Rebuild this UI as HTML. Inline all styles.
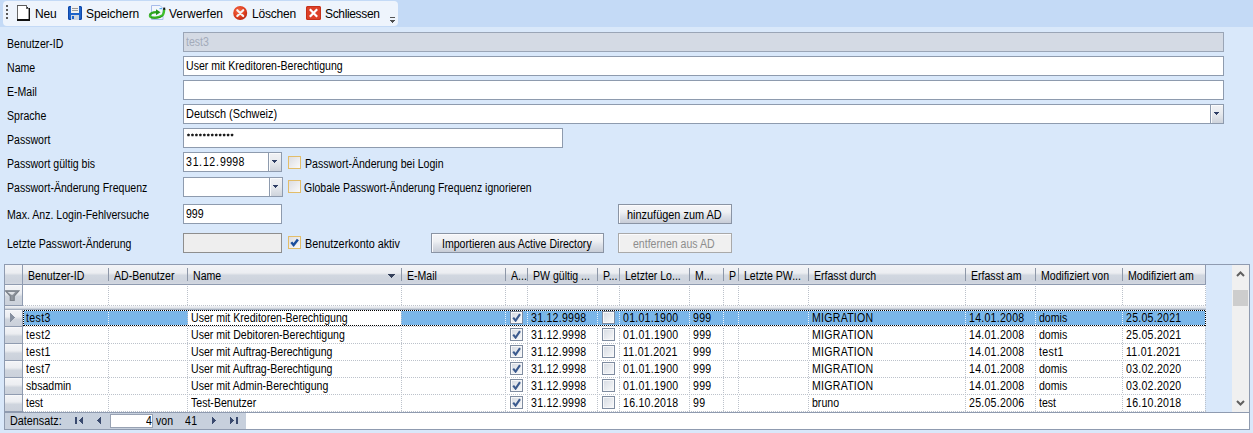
<!DOCTYPE html>
<html><head><meta charset="utf-8">
<style>
*{box-sizing:border-box}
html,body{margin:0;padding:0}
body{width:1253px;height:433px;overflow:hidden;position:relative;background:#d9e8fa;font-family:"Liberation Sans",sans-serif;font-size:11px;color:#000;letter-spacing:-0.28px}
.a{position:absolute}
.t{position:absolute;white-space:nowrap;font-size:12px;line-height:14px;height:14px;letter-spacing:0;transform:scaleX(.88);transform-origin:0 0}
.tb{position:absolute;white-space:nowrap;font-size:12px;line-height:14px;letter-spacing:-0.22px}
.box{position:absolute;background:#fff;border:1px solid #8e9bae}
.cb{position:absolute;width:13px;height:13px;border:1px solid #e2bd6a;background:linear-gradient(135deg,#dcdde2,#fafafa)}
.btn{position:absolute;height:20px;border:1px solid #8a94a4;background:linear-gradient(#f5f5f8 0%,#eef0f3 40%,#dde1e8 62%,#c8cdd7 100%);box-shadow:inset 1px 1px 0 #fbfbfd}
.ddb{position:absolute;width:14px;border:1px solid #8e9bae;background:linear-gradient(#f1f2f5 0%,#e8ebef 45%,#cfd4dc 100%);box-shadow:inset 1px 1px 0 #fafbfc}
.arr{position:absolute;width:5px;height:3px;background:#2e3e64;clip-path:polygon(0 0,100% 0,50% 100%)}
.hdr{background:linear-gradient(#f3f4f7 0%,#eceef2 40%,#e4e7ec 46%,#d1d7e0 54%,#cdd3dd 88%,#d3d8e1 100%)}
.ind{background:linear-gradient(#f3f4f7 0%,#eceef2 40%,#e2e5ea 48%,#cfd5de 58%,#cbd1db 100%);box-shadow:inset 0 1px 0 #f7f8fa}
.band{background:linear-gradient(#f2f3f6 0%,#dfe3e9 50%,#b9c1cc 75%,#8f9bb0 100%)}
.hd{background:repeating-linear-gradient(90deg,#bcc2cb 0 1px,#fff 1px 2px)}
.vd{background:repeating-linear-gradient(180deg,#bcc2cb 0 1px,transparent 1px 2px)}
.fh{background:repeating-linear-gradient(90deg,#fff 0 1px,#000 1px 2px)}
.fv{background:repeating-linear-gradient(180deg,#fff 0 1px,#000 1px 2px)}
.vdw{background:repeating-linear-gradient(180deg,#e8f2fb 0 1px,transparent 1px 2px)}
.gcb{width:13px;height:13px;border:1px solid #7f8ca0;background:linear-gradient(135deg,#d5dae2 0%,#eef0f3 70%,#fafafa 100%);box-shadow:inset 0 0 0 1px #f6f7f9}
</style></head><body>
<!-- toolbar strip -->
<div class="a" style="left:0;top:0;width:1253px;height:27px;background:#c4daf6"></div>
<div class="a" style="left:3px;top:1px;width:395px;height:25px;background:#eef4fc;border-radius:4px"></div>
<!-- grip -->
<div class="a" style="left:6px;top:5px;width:2px;height:2px;background:#5a5a5a"></div>
<div class="a" style="left:6px;top:9px;width:2px;height:2px;background:#5a5a5a"></div>
<div class="a" style="left:6px;top:13px;width:2px;height:2px;background:#5a5a5a"></div>
<div class="a" style="left:6px;top:17px;width:2px;height:2px;background:#5a5a5a"></div>
<!-- new icon -->
<svg class="a" style="left:16px;top:4px" width="16" height="18" viewBox="0 0 16 18" shape-rendering="crispEdges">
<path d="M2 2 H10 V3 H11 V4 H12 V5 H13 V16 H2 Z" fill="#fff"/>
<rect x="1" y="1" width="1" height="16" fill="#6a6a6a"/>
<rect x="1" y="1" width="9" height="1" fill="#5a5a5a"/>
<rect x="10" y="2" width="1" height="1" fill="#2a2a2a"/>
<rect x="11" y="3" width="1" height="1" fill="#2a2a2a"/>
<rect x="12" y="4" width="1" height="1" fill="#2a2a2a"/>
<rect x="10" y="1" width="1" height="3" fill="#666"/><rect x="10" y="4" width="3" height="1" fill="#666"/>
<rect x="13" y="4" width="1" height="13" fill="#111"/>
<rect x="12" y="5" width="1" height="11" fill="#9a9a9a"/>
<rect x="1" y="15" width="13" height="2" fill="#111"/>
</svg>
<div class="tb" style="left:35px;top:7px">Neu</div>
<!-- save icon -->
<svg class="a" style="left:68px;top:6px" width="14" height="14" viewBox="0 0 14 14">
<rect x="0" y="0" width="14" height="14" rx="1.5" fill="#1d62c9"/>
<rect x="0.5" y="0.5" width="13" height="13" rx="1.5" fill="none" stroke="#0f47a8"/>
<rect x="3" y="0" width="8" height="7" fill="#f2f2f2"/>
<rect x="4" y="2" width="6" height="1" fill="#9a9a9a"/>
<rect x="4" y="4" width="6" height="1" fill="#9a9a9a"/>
<rect x="3" y="9" width="8" height="5" fill="#cfd6e2"/>
<rect x="4" y="10" width="2" height="3" fill="#1d62c9"/>
</svg>
<div class="tb" style="left:86px;top:7px;letter-spacing:-0.1px">Speichern</div>
<!-- discard icon -->
<svg class="a" style="left:148px;top:4px" width="18" height="17" viewBox="0 0 18 17">
<path d="M3.5 1.5 H12 L15 4.5 V15.5 H3.5 Z" fill="#f2f6fe" stroke="#a7bcea" stroke-width="1"/>
<rect x="11.5" y="4" width="2.5" height="1.2" fill="#4fb3f2"/>
<path d="M1.8 11.8 C2 9.2 5 8.2 8.8 8.2" fill="none" stroke="#2fa61f" stroke-width="2.2"/>
<path d="M8 5.2 L12.5 8.2 L8 11.2 Z" fill="#22961a"/>
<path d="M1.8 11.8 C2.6 14.2 11 14.4 14.6 11.2 C15.9 9.8 16.1 7.2 16.3 5" fill="none" stroke="#3fbf2b" stroke-width="2.3"/>
<path d="M3 13.6 C6 14.8 12 14.4 14.8 12" fill="none" stroke="#1e8a15" stroke-width="0.9"/>
<rect x="15.2" y="3.6" width="2" height="2.2" fill="#111"/>
</svg>
<div class="tb" style="left:169px;top:7px;letter-spacing:0">Verwerfen</div>
<!-- delete icon -->
<svg class="a" style="left:233px;top:6px" width="15" height="15" viewBox="0 0 15 15">
<defs><radialGradient id="rg" cx="0.4" cy="0.35" r="0.7"><stop offset="0" stop-color="#f56a4a"/><stop offset="0.6" stop-color="#e0401f"/><stop offset="1" stop-color="#b42412"/></radialGradient></defs>
<circle cx="7.2" cy="7" r="7" fill="url(#rg)"/>
<path d="M4.3 4.2 L10.2 10 M10.2 4.2 L4.3 10" stroke="#f4f4f4" stroke-width="2.2" stroke-linecap="round"/>
</svg>
<div class="tb" style="left:252px;top:7px">Löschen</div>
<!-- close icon -->
<svg class="a" style="left:306px;top:6px" width="15" height="14" viewBox="0 0 15 14">
<rect x="0" y="0" width="15" height="14" rx="1.5" fill="#dd4128"/>
<rect x="0.5" y="0.5" width="14" height="13" rx="1.5" fill="none" stroke="#c5301a"/>
<path d="M3.8 3.2 L11.2 10.8 M11.2 3.2 L3.8 10.8" stroke="#fff" stroke-width="2.2"/>
</svg>
<div class="tb" style="left:325px;top:7px;letter-spacing:-0.35px">Schliessen</div>
<!-- overflow -->
<div class="a" style="left:390px;top:17px;width:5px;height:1px;background:#555"></div>
<svg class="a" style="left:390px;top:20px" width="5" height="3" viewBox="0 0 5 3" shape-rendering="crispEdges"><path d="M0 0H5V1H4V2H3V3H2V2H1V1H0Z" fill="#505050"/></svg>

<!-- form labels -->
<div class="t" style="left:7px;top:37px">Benutzer-ID</div>
<div class="t" style="left:7px;top:61px">Name</div>
<div class="t" style="left:7px;top:85px">E-Mail</div>
<div class="t" style="left:7px;top:109px">Sprache</div>
<div class="t" style="left:7px;top:133px">Passwort</div>
<div class="t" style="left:7px;top:157px">Passwort gültig bis</div>
<div class="t" style="left:7px;top:181px">Passwort-Änderung Frequenz</div>
<div class="t" style="left:7px;top:208px">Max. Anz. Login-Fehlversuche</div>
<div class="t" style="left:7px;top:237px">Letzte Passwort-Änderung</div>

<!-- boxes -->
<div class="box" style="left:183px;top:32px;width:1041px;height:20px;background:#d4dae4;border-color:#9aa5b6"></div>
<div class="t" style="left:186px;top:35px;color:#a3abba">test3</div>
<div class="box" style="left:183px;top:56px;width:1041px;height:20px"></div>
<div class="t" style="left:186px;top:59px">User mit Kreditoren-Berechtigung</div>
<div class="box" style="left:183px;top:80px;width:1041px;height:20px"></div>
<div class="box" style="left:183px;top:104px;width:1041px;height:20px"></div>
<div class="ddb" style="left:1210px;top:104px;height:20px"></div>
<svg class="a" style="left:1214px;top:112px" width="5" height="3" viewBox="0 0 5 3" shape-rendering="crispEdges"><path d="M0 0H5V1H4V2H3V3H2V2H1V1H0Z" fill="#2e3e64"/></svg>
<div class="t" style="left:186px;top:107px;transform:scaleX(.91)">Deutsch (Schweiz)</div>
<div class="box" style="left:183px;top:128px;width:380px;height:20px"></div>
<svg class="a" style="left:186px;top:133px" width="50" height="4" viewBox="0 0 50 4"><path d="M1.00 1.6 l1.5 -1.1 l1.5 1.1 l-0.55 1.75 h-1.9 Z" fill="#1a1a1a"/><path d="M4.96 1.6 l1.5 -1.1 l1.5 1.1 l-0.55 1.75 h-1.9 Z" fill="#1a1a1a"/><path d="M8.92 1.6 l1.5 -1.1 l1.5 1.1 l-0.55 1.75 h-1.9 Z" fill="#1a1a1a"/><path d="M12.88 1.6 l1.5 -1.1 l1.5 1.1 l-0.55 1.75 h-1.9 Z" fill="#1a1a1a"/><path d="M16.84 1.6 l1.5 -1.1 l1.5 1.1 l-0.55 1.75 h-1.9 Z" fill="#1a1a1a"/><path d="M20.80 1.6 l1.5 -1.1 l1.5 1.1 l-0.55 1.75 h-1.9 Z" fill="#1a1a1a"/><path d="M24.76 1.6 l1.5 -1.1 l1.5 1.1 l-0.55 1.75 h-1.9 Z" fill="#1a1a1a"/><path d="M28.72 1.6 l1.5 -1.1 l1.5 1.1 l-0.55 1.75 h-1.9 Z" fill="#1a1a1a"/><path d="M32.68 1.6 l1.5 -1.1 l1.5 1.1 l-0.55 1.75 h-1.9 Z" fill="#1a1a1a"/><path d="M36.64 1.6 l1.5 -1.1 l1.5 1.1 l-0.55 1.75 h-1.9 Z" fill="#1a1a1a"/><path d="M40.60 1.6 l1.5 -1.1 l1.5 1.1 l-0.55 1.75 h-1.9 Z" fill="#1a1a1a"/><path d="M44.56 1.6 l1.5 -1.1 l1.5 1.1 l-0.55 1.75 h-1.9 Z" fill="#1a1a1a"/></svg>
<div class="box" style="left:183px;top:152px;width:99px;height:20px"></div>
<div class="ddb" style="left:268px;top:152px;height:20px"></div>
<svg class="a" style="left:272px;top:160px" width="5" height="3" viewBox="0 0 5 3" shape-rendering="crispEdges"><path d="M0 0H5V1H4V2H3V3H2V2H1V1H0Z" fill="#2e3e64"/></svg>
<div class="t" style="left:186px;top:155px;letter-spacing:0.9px">31</div><div class="t" style="left:199px;top:155px">.</div><div class="t" style="left:203px;top:155px;letter-spacing:0.5px">12</div><div class="t" style="left:216px;top:155px">.</div><div class="t" style="left:220px;top:155px;letter-spacing:0.35px">9998</div>
<div class="box" style="left:183px;top:177px;width:100px;height:20px"></div>
<div class="ddb" style="left:269px;top:177px;height:20px"></div>
<svg class="a" style="left:273px;top:185px" width="5" height="3" viewBox="0 0 5 3" shape-rendering="crispEdges"><path d="M0 0H5V1H4V2H3V3H2V2H1V1H0Z" fill="#2e3e64"/></svg>
<div class="box" style="left:183px;top:204px;width:99px;height:20px"></div>
<div class="t" style="left:186px;top:207px">999</div>
<div class="box" style="left:183px;top:233px;width:99px;height:20px;background:#eeeeee;border-color:#8e8e8e"></div>

<!-- checkboxes -->
<div class="cb" style="left:288px;top:156px"></div>
<div class="t" style="left:305px;top:157px">Passwort-Änderung bei Login</div>
<div class="cb" style="left:288px;top:180px"></div>
<div class="t" style="left:304px;top:181px;transform:scaleX(.873)">Globale Passwort-Änderung Frequenz ignorieren</div>
<div class="cb" style="left:288px;top:236px"></div>
<svg class="a" style="left:289px;top:237px" width="11" height="11" viewBox="0 0 11 11"><path d="M2.3 5.2 L4.6 8 L8.9 2.4" fill="none" stroke="#1c4f9e" stroke-width="2.5"/></svg>
<div class="t" style="left:305px;top:237px;transform:scaleX(.9)">Benutzerkonto aktiv</div>

<!-- buttons -->
<div class="btn" style="left:618px;top:204px;width:114px"></div>
<div class="t" style="left:627px;top:208px;transform:scaleX(.91)">hinzufügen zum AD</div>
<div class="btn" style="left:431px;top:233px;width:173px"></div>
<div class="t" style="left:442px;top:237px">Importieren aus Active Directory</div>
<div class="btn" style="left:618px;top:233px;width:114px;background:#f0f0f0;border-color:#a9a9a9"></div>
<div class="t" style="left:633px;top:237px;color:#8d8d8d">entfernen aus AD</div>

<!-- GRID -->
<div class="a" style="left:4px;top:264px;width:1246px;height:166px;border:1px solid #8f9bb0;background:#d9e8fa"></div>
<div class="a hdr" style="left:5px;top:265px;width:1201px;height:19px"></div>
<div class="a" style="left:5px;top:284px;width:1201px;height:1px;background:#8f9bb0"></div>
<div class="a" style="left:1205px;top:265px;width:1px;height:20px;background:#8f9bb0"></div>
<div class="a" style="left:22px;top:265px;width:1px;height:147px;background:#8f9bb0"></div>
<div class="a" style="left:108px;top:268px;width:1px;height:13px;background:#8d97a8"></div>
<div class="a" style="left:187px;top:268px;width:1px;height:13px;background:#8d97a8"></div>
<div class="a" style="left:401px;top:268px;width:1px;height:13px;background:#8d97a8"></div>
<div class="a" style="left:505px;top:268px;width:1px;height:13px;background:#8d97a8"></div>
<div class="a" style="left:527px;top:268px;width:1px;height:13px;background:#8d97a8"></div>
<div class="a" style="left:597px;top:268px;width:1px;height:13px;background:#8d97a8"></div>
<div class="a" style="left:619px;top:268px;width:1px;height:13px;background:#8d97a8"></div>
<div class="a" style="left:689px;top:268px;width:1px;height:13px;background:#8d97a8"></div>
<div class="a" style="left:723px;top:268px;width:1px;height:13px;background:#8d97a8"></div>
<div class="a" style="left:738px;top:268px;width:1px;height:13px;background:#8d97a8"></div>
<div class="a" style="left:808px;top:268px;width:1px;height:13px;background:#8d97a8"></div>
<div class="a" style="left:965px;top:268px;width:1px;height:13px;background:#8d97a8"></div>
<div class="a" style="left:1035px;top:268px;width:1px;height:13px;background:#8d97a8"></div>
<div class="a" style="left:1122px;top:268px;width:1px;height:13px;background:#8d97a8"></div>
<div class="t" style="left:28px;top:269px">Benutzer-ID</div>
<div class="t" style="left:114px;top:269px">AD-Benutzer</div>
<div class="t" style="left:193px;top:269px">Name</div>
<div class="t" style="left:407px;top:269px">E-Mail</div>
<div class="t" style="left:511px;top:269px">A...</div>
<div class="t" style="left:533px;top:269px">PW gültig ...</div>
<div class="t" style="left:603px;top:269px">P...</div>
<div class="t" style="left:625px;top:269px">Letzter Lo...</div>
<div class="t" style="left:695px;top:269px">M...</div>
<div class="t" style="left:729px;top:269px">P</div>
<div class="t" style="left:744px;top:269px">Letzte PW...</div>
<div class="t" style="left:814px;top:269px">Erfasst durch</div>
<div class="t" style="left:971px;top:269px">Erfasst am</div>
<div class="t" style="left:1041px;top:269px">Modifiziert von</div>
<div class="t" style="left:1128px;top:269px">Modifiziert am</div>
<svg class="a" style="left:388px;top:274px" width="8" height="5" viewBox="0 0 8 5" shape-rendering="crispEdges"><path d="M0 0H7V1H6V2H5V3H4V4H3V3H2V2H1V1H0Z" fill="#34405a"/></svg>
<div class="a" style="left:23px;top:285px;width:1183px;height:20px;background:#fff"></div>
<div class="a ind" style="left:5px;top:285px;width:17px;height:20px"></div>
<div class="a" style="left:5px;top:305px;width:18px;height:1px;background:#8f9bb0"></div>
<svg class="a" style="left:5px;top:290px" width="15" height="11" viewBox="0 0 15 11"><path d="M0.5 0.8 H14 L9.2 6 V10.5 H5.3 V6 Z" fill="#8e949d" stroke="#7a8089" stroke-width="1.2"/><path d="M2.6 2 H10.2 L7.8 4.8 H6.2 Z" fill="#dfe2e7"/></svg>
<div class="a hd" style="left:23px;top:305px;width:1183px;height:1px"></div>
<div class="a vd" style="left:108px;top:285px;width:1px;height:20px;background-position:0 1px"></div>
<div class="a vd" style="left:187px;top:285px;width:1px;height:20px;background-position:0 1px"></div>
<div class="a vd" style="left:401px;top:285px;width:1px;height:20px;background-position:0 1px"></div>
<div class="a vd" style="left:505px;top:285px;width:1px;height:20px;background-position:0 1px"></div>
<div class="a vd" style="left:527px;top:285px;width:1px;height:20px;background-position:0 1px"></div>
<div class="a vd" style="left:597px;top:285px;width:1px;height:20px;background-position:0 1px"></div>
<div class="a vd" style="left:619px;top:285px;width:1px;height:20px;background-position:0 1px"></div>
<div class="a vd" style="left:689px;top:285px;width:1px;height:20px;background-position:0 1px"></div>
<div class="a vd" style="left:723px;top:285px;width:1px;height:20px;background-position:0 1px"></div>
<div class="a vd" style="left:738px;top:285px;width:1px;height:20px;background-position:0 1px"></div>
<div class="a vd" style="left:808px;top:285px;width:1px;height:20px;background-position:0 1px"></div>
<div class="a vd" style="left:965px;top:285px;width:1px;height:20px;background-position:0 1px"></div>
<div class="a vd" style="left:1035px;top:285px;width:1px;height:20px;background-position:0 1px"></div>
<div class="a vd" style="left:1122px;top:285px;width:1px;height:20px;background-position:0 1px"></div>
<div class="a vd" style="left:1205px;top:285px;width:1px;height:20px;background-position:0 1px"></div>
<div class="a band" style="left:5px;top:306px;width:1201px;height:4px"></div>
<div class="a ind" style="left:5px;top:310px;width:17px;height:16px"></div>
<div class="a" style="left:5px;top:326px;width:17px;height:1px;background:#8f9bb0"></div>
<div class="a" style="left:23px;top:310px;width:1182px;height:16px;background:#7ab6e9"></div>
<div class="a" style="left:188px;top:310px;width:213px;height:16px;background:#fff"></div>
<div class="a hd" style="left:23px;top:326px;width:1183px;height:1px"></div>
<div class="a vdw" style="left:108px;top:310px;width:1px;height:16px"></div>
<div class="a vd" style="left:187px;top:310px;width:1px;height:16px"></div>
<div class="a vd" style="left:401px;top:310px;width:1px;height:16px"></div>
<div class="a vdw" style="left:505px;top:310px;width:1px;height:16px"></div>
<div class="a vdw" style="left:527px;top:310px;width:1px;height:16px"></div>
<div class="a vdw" style="left:597px;top:310px;width:1px;height:16px"></div>
<div class="a vdw" style="left:619px;top:310px;width:1px;height:16px"></div>
<div class="a vdw" style="left:689px;top:310px;width:1px;height:16px"></div>
<div class="a vdw" style="left:723px;top:310px;width:1px;height:16px"></div>
<div class="a vdw" style="left:738px;top:310px;width:1px;height:16px"></div>
<div class="a vdw" style="left:808px;top:310px;width:1px;height:16px"></div>
<div class="a vdw" style="left:965px;top:310px;width:1px;height:16px"></div>
<div class="a vdw" style="left:1035px;top:310px;width:1px;height:16px"></div>
<div class="a vdw" style="left:1122px;top:310px;width:1px;height:16px"></div>
<div class="a vdw" style="left:1205px;top:310px;width:1px;height:16px"></div>
<div class="t" style="left:26px;top:311px;letter-spacing:0.45px">test3</div>
<div class="t" style="left:191px;top:311px">User mit Kreditoren-Berechtigung</div>
<div class="a gcb" style="left:510px;top:311px"></div>
<svg class="a" style="left:512px;top:313px" width="9" height="9" viewBox="0 0 9 9"><path d="M1.2 4.6 L3.6 7.6 L8 1.2" fill="none" stroke="#3b5a8e" stroke-width="2.1"/></svg>
<div class="t" style="left:531px;top:311px;letter-spacing:0.3px">31.12.9998</div>
<div class="a gcb" style="left:602px;top:311px"></div>
<div class="t" style="left:623px;top:311px;letter-spacing:0.3px">01.01.1900</div>
<div class="t" style="left:693px;top:311px;letter-spacing:0.3px">999</div>
<div class="t" style="left:812px;top:311px;letter-spacing:0.3px">MIGRATION</div>
<div class="t" style="left:969px;top:311px;letter-spacing:0.3px">14.01.2008</div>
<div class="t" style="left:1039px;top:311px">domis</div>
<div class="t" style="left:1126px;top:311px;letter-spacing:0.3px">25.05.2021</div>
<div class="a fh" style="left:23px;top:310px;width:1183px;height:1px"></div>
<div class="a fh" style="left:23px;top:325px;width:1183px;height:1px"></div>
<div class="a fv" style="left:23px;top:310px;width:1px;height:16px"></div>
<div class="a fv" style="left:1205px;top:310px;width:1px;height:16px"></div>
<div class="a ind" style="left:5px;top:327px;width:17px;height:16px"></div>
<div class="a" style="left:5px;top:343px;width:17px;height:1px;background:#8f9bb0"></div>
<div class="a" style="left:23px;top:327px;width:1182px;height:16px;background:#fff"></div>
<div class="a hd" style="left:23px;top:343px;width:1183px;height:1px"></div>
<div class="a vd" style="left:108px;top:327px;width:1px;height:16px;background-position:0 1px"></div>
<div class="a vd" style="left:187px;top:327px;width:1px;height:16px;background-position:0 1px"></div>
<div class="a vd" style="left:401px;top:327px;width:1px;height:16px;background-position:0 1px"></div>
<div class="a vd" style="left:505px;top:327px;width:1px;height:16px;background-position:0 1px"></div>
<div class="a vd" style="left:527px;top:327px;width:1px;height:16px;background-position:0 1px"></div>
<div class="a vd" style="left:597px;top:327px;width:1px;height:16px;background-position:0 1px"></div>
<div class="a vd" style="left:619px;top:327px;width:1px;height:16px;background-position:0 1px"></div>
<div class="a vd" style="left:689px;top:327px;width:1px;height:16px;background-position:0 1px"></div>
<div class="a vd" style="left:723px;top:327px;width:1px;height:16px;background-position:0 1px"></div>
<div class="a vd" style="left:738px;top:327px;width:1px;height:16px;background-position:0 1px"></div>
<div class="a vd" style="left:808px;top:327px;width:1px;height:16px;background-position:0 1px"></div>
<div class="a vd" style="left:965px;top:327px;width:1px;height:16px;background-position:0 1px"></div>
<div class="a vd" style="left:1035px;top:327px;width:1px;height:16px;background-position:0 1px"></div>
<div class="a vd" style="left:1122px;top:327px;width:1px;height:16px;background-position:0 1px"></div>
<div class="a vd" style="left:1205px;top:327px;width:1px;height:16px;background-position:0 1px"></div>
<div class="t" style="left:26px;top:328px;letter-spacing:0.45px">test2</div>
<div class="t" style="left:191px;top:328px">User mit Debitoren-Berechtigung</div>
<div class="a gcb" style="left:510px;top:328px"></div>
<svg class="a" style="left:512px;top:330px" width="9" height="9" viewBox="0 0 9 9"><path d="M1.2 4.6 L3.6 7.6 L8 1.2" fill="none" stroke="#3b5a8e" stroke-width="2.1"/></svg>
<div class="t" style="left:531px;top:328px;letter-spacing:0.3px">31.12.9998</div>
<div class="a gcb" style="left:602px;top:328px"></div>
<div class="t" style="left:623px;top:328px;letter-spacing:0.3px">01.01.1900</div>
<div class="t" style="left:693px;top:328px;letter-spacing:0.3px">999</div>
<div class="t" style="left:812px;top:328px;letter-spacing:0.3px">MIGRATION</div>
<div class="t" style="left:969px;top:328px;letter-spacing:0.3px">14.01.2008</div>
<div class="t" style="left:1039px;top:328px">domis</div>
<div class="t" style="left:1126px;top:328px;letter-spacing:0.3px">25.05.2021</div>
<div class="a ind" style="left:5px;top:344px;width:17px;height:16px"></div>
<div class="a" style="left:5px;top:360px;width:17px;height:1px;background:#8f9bb0"></div>
<div class="a" style="left:23px;top:344px;width:1182px;height:16px;background:#fff"></div>
<div class="a hd" style="left:23px;top:360px;width:1183px;height:1px"></div>
<div class="a vd" style="left:108px;top:344px;width:1px;height:16px"></div>
<div class="a vd" style="left:187px;top:344px;width:1px;height:16px"></div>
<div class="a vd" style="left:401px;top:344px;width:1px;height:16px"></div>
<div class="a vd" style="left:505px;top:344px;width:1px;height:16px"></div>
<div class="a vd" style="left:527px;top:344px;width:1px;height:16px"></div>
<div class="a vd" style="left:597px;top:344px;width:1px;height:16px"></div>
<div class="a vd" style="left:619px;top:344px;width:1px;height:16px"></div>
<div class="a vd" style="left:689px;top:344px;width:1px;height:16px"></div>
<div class="a vd" style="left:723px;top:344px;width:1px;height:16px"></div>
<div class="a vd" style="left:738px;top:344px;width:1px;height:16px"></div>
<div class="a vd" style="left:808px;top:344px;width:1px;height:16px"></div>
<div class="a vd" style="left:965px;top:344px;width:1px;height:16px"></div>
<div class="a vd" style="left:1035px;top:344px;width:1px;height:16px"></div>
<div class="a vd" style="left:1122px;top:344px;width:1px;height:16px"></div>
<div class="a vd" style="left:1205px;top:344px;width:1px;height:16px"></div>
<div class="t" style="left:26px;top:345px;letter-spacing:0.45px">test1</div>
<div class="t" style="left:191px;top:345px">User mit Auftrag-Berechtigung</div>
<div class="a gcb" style="left:510px;top:345px"></div>
<svg class="a" style="left:512px;top:347px" width="9" height="9" viewBox="0 0 9 9"><path d="M1.2 4.6 L3.6 7.6 L8 1.2" fill="none" stroke="#3b5a8e" stroke-width="2.1"/></svg>
<div class="t" style="left:531px;top:345px;letter-spacing:0.3px">31.12.9998</div>
<div class="a gcb" style="left:602px;top:345px"></div>
<div class="t" style="left:623px;top:345px;letter-spacing:0.3px">11.01.2021</div>
<div class="t" style="left:693px;top:345px;letter-spacing:0.3px">999</div>
<div class="t" style="left:812px;top:345px;letter-spacing:0.3px">MIGRATION</div>
<div class="t" style="left:969px;top:345px;letter-spacing:0.3px">14.01.2008</div>
<div class="t" style="left:1039px;top:345px;letter-spacing:0.45px">test1</div>
<div class="t" style="left:1126px;top:345px;letter-spacing:0.3px">11.01.2021</div>
<div class="a ind" style="left:5px;top:361px;width:17px;height:16px"></div>
<div class="a" style="left:5px;top:377px;width:17px;height:1px;background:#8f9bb0"></div>
<div class="a" style="left:23px;top:361px;width:1182px;height:16px;background:#fff"></div>
<div class="a hd" style="left:23px;top:377px;width:1183px;height:1px"></div>
<div class="a vd" style="left:108px;top:361px;width:1px;height:16px;background-position:0 1px"></div>
<div class="a vd" style="left:187px;top:361px;width:1px;height:16px;background-position:0 1px"></div>
<div class="a vd" style="left:401px;top:361px;width:1px;height:16px;background-position:0 1px"></div>
<div class="a vd" style="left:505px;top:361px;width:1px;height:16px;background-position:0 1px"></div>
<div class="a vd" style="left:527px;top:361px;width:1px;height:16px;background-position:0 1px"></div>
<div class="a vd" style="left:597px;top:361px;width:1px;height:16px;background-position:0 1px"></div>
<div class="a vd" style="left:619px;top:361px;width:1px;height:16px;background-position:0 1px"></div>
<div class="a vd" style="left:689px;top:361px;width:1px;height:16px;background-position:0 1px"></div>
<div class="a vd" style="left:723px;top:361px;width:1px;height:16px;background-position:0 1px"></div>
<div class="a vd" style="left:738px;top:361px;width:1px;height:16px;background-position:0 1px"></div>
<div class="a vd" style="left:808px;top:361px;width:1px;height:16px;background-position:0 1px"></div>
<div class="a vd" style="left:965px;top:361px;width:1px;height:16px;background-position:0 1px"></div>
<div class="a vd" style="left:1035px;top:361px;width:1px;height:16px;background-position:0 1px"></div>
<div class="a vd" style="left:1122px;top:361px;width:1px;height:16px;background-position:0 1px"></div>
<div class="a vd" style="left:1205px;top:361px;width:1px;height:16px;background-position:0 1px"></div>
<div class="t" style="left:26px;top:362px;letter-spacing:0.45px">test7</div>
<div class="t" style="left:191px;top:362px">User mit Auftrag-Berechtigung</div>
<div class="a gcb" style="left:510px;top:362px"></div>
<svg class="a" style="left:512px;top:364px" width="9" height="9" viewBox="0 0 9 9"><path d="M1.2 4.6 L3.6 7.6 L8 1.2" fill="none" stroke="#3b5a8e" stroke-width="2.1"/></svg>
<div class="t" style="left:531px;top:362px;letter-spacing:0.3px">31.12.9998</div>
<div class="a gcb" style="left:602px;top:362px"></div>
<div class="t" style="left:623px;top:362px;letter-spacing:0.3px">01.01.1900</div>
<div class="t" style="left:693px;top:362px;letter-spacing:0.3px">999</div>
<div class="t" style="left:812px;top:362px;letter-spacing:0.3px">MIGRATION</div>
<div class="t" style="left:969px;top:362px;letter-spacing:0.3px">14.01.2008</div>
<div class="t" style="left:1039px;top:362px">domis</div>
<div class="t" style="left:1126px;top:362px;letter-spacing:0.3px">03.02.2020</div>
<div class="a ind" style="left:5px;top:378px;width:17px;height:16px"></div>
<div class="a" style="left:5px;top:394px;width:17px;height:1px;background:#8f9bb0"></div>
<div class="a" style="left:23px;top:378px;width:1182px;height:16px;background:#fff"></div>
<div class="a hd" style="left:23px;top:394px;width:1183px;height:1px"></div>
<div class="a vd" style="left:108px;top:378px;width:1px;height:16px"></div>
<div class="a vd" style="left:187px;top:378px;width:1px;height:16px"></div>
<div class="a vd" style="left:401px;top:378px;width:1px;height:16px"></div>
<div class="a vd" style="left:505px;top:378px;width:1px;height:16px"></div>
<div class="a vd" style="left:527px;top:378px;width:1px;height:16px"></div>
<div class="a vd" style="left:597px;top:378px;width:1px;height:16px"></div>
<div class="a vd" style="left:619px;top:378px;width:1px;height:16px"></div>
<div class="a vd" style="left:689px;top:378px;width:1px;height:16px"></div>
<div class="a vd" style="left:723px;top:378px;width:1px;height:16px"></div>
<div class="a vd" style="left:738px;top:378px;width:1px;height:16px"></div>
<div class="a vd" style="left:808px;top:378px;width:1px;height:16px"></div>
<div class="a vd" style="left:965px;top:378px;width:1px;height:16px"></div>
<div class="a vd" style="left:1035px;top:378px;width:1px;height:16px"></div>
<div class="a vd" style="left:1122px;top:378px;width:1px;height:16px"></div>
<div class="a vd" style="left:1205px;top:378px;width:1px;height:16px"></div>
<div class="t" style="left:26px;top:379px">sbsadmin</div>
<div class="t" style="left:191px;top:379px">User mit Admin-Berechtigung</div>
<div class="a gcb" style="left:510px;top:379px"></div>
<svg class="a" style="left:512px;top:381px" width="9" height="9" viewBox="0 0 9 9"><path d="M1.2 4.6 L3.6 7.6 L8 1.2" fill="none" stroke="#3b5a8e" stroke-width="2.1"/></svg>
<div class="t" style="left:531px;top:379px;letter-spacing:0.3px">31.12.9998</div>
<div class="a gcb" style="left:602px;top:379px"></div>
<div class="t" style="left:623px;top:379px;letter-spacing:0.3px">01.01.1900</div>
<div class="t" style="left:693px;top:379px;letter-spacing:0.3px">999</div>
<div class="t" style="left:812px;top:379px;letter-spacing:0.3px">MIGRATION</div>
<div class="t" style="left:969px;top:379px;letter-spacing:0.3px">14.01.2008</div>
<div class="t" style="left:1039px;top:379px">domis</div>
<div class="t" style="left:1126px;top:379px;letter-spacing:0.3px">03.02.2020</div>
<div class="a ind" style="left:5px;top:395px;width:17px;height:16px"></div>
<div class="a" style="left:5px;top:411px;width:17px;height:1px;background:#8f9bb0"></div>
<div class="a" style="left:23px;top:395px;width:1182px;height:16px;background:#fff"></div>
<div class="a hd" style="left:23px;top:411px;width:1183px;height:1px"></div>
<div class="a vd" style="left:108px;top:395px;width:1px;height:16px;background-position:0 1px"></div>
<div class="a vd" style="left:187px;top:395px;width:1px;height:16px;background-position:0 1px"></div>
<div class="a vd" style="left:401px;top:395px;width:1px;height:16px;background-position:0 1px"></div>
<div class="a vd" style="left:505px;top:395px;width:1px;height:16px;background-position:0 1px"></div>
<div class="a vd" style="left:527px;top:395px;width:1px;height:16px;background-position:0 1px"></div>
<div class="a vd" style="left:597px;top:395px;width:1px;height:16px;background-position:0 1px"></div>
<div class="a vd" style="left:619px;top:395px;width:1px;height:16px;background-position:0 1px"></div>
<div class="a vd" style="left:689px;top:395px;width:1px;height:16px;background-position:0 1px"></div>
<div class="a vd" style="left:723px;top:395px;width:1px;height:16px;background-position:0 1px"></div>
<div class="a vd" style="left:738px;top:395px;width:1px;height:16px;background-position:0 1px"></div>
<div class="a vd" style="left:808px;top:395px;width:1px;height:16px;background-position:0 1px"></div>
<div class="a vd" style="left:965px;top:395px;width:1px;height:16px;background-position:0 1px"></div>
<div class="a vd" style="left:1035px;top:395px;width:1px;height:16px;background-position:0 1px"></div>
<div class="a vd" style="left:1122px;top:395px;width:1px;height:16px;background-position:0 1px"></div>
<div class="a vd" style="left:1205px;top:395px;width:1px;height:16px;background-position:0 1px"></div>
<div class="t" style="left:26px;top:396px">test</div>
<div class="t" style="left:191px;top:396px">Test-Benutzer</div>
<div class="a gcb" style="left:510px;top:396px"></div>
<svg class="a" style="left:512px;top:398px" width="9" height="9" viewBox="0 0 9 9"><path d="M1.2 4.6 L3.6 7.6 L8 1.2" fill="none" stroke="#3b5a8e" stroke-width="2.1"/></svg>
<div class="t" style="left:531px;top:396px;letter-spacing:0.3px">31.12.9998</div>
<div class="a gcb" style="left:602px;top:396px"></div>
<div class="t" style="left:623px;top:396px;letter-spacing:0.3px">16.10.2018</div>
<div class="t" style="left:693px;top:396px;letter-spacing:0.3px">99</div>
<div class="t" style="left:812px;top:396px">bruno</div>
<div class="t" style="left:969px;top:396px;letter-spacing:0.3px">25.05.2006</div>
<div class="t" style="left:1039px;top:396px">test</div>
<div class="t" style="left:1126px;top:396px;letter-spacing:0.3px">16.10.2018</div>
<svg class="a" style="left:10px;top:313px" width="5" height="9" viewBox="0 0 5 9" shape-rendering="crispEdges"><path d="M0 0H1V1H2V2H3V3H4V4H5V5H4V6H3V7H2V8H1V9H0Z" fill="#8690a0"/></svg>
<div class="a" style="left:1232px;top:265px;width:17px;height:147px;background:#f0f0f0"></div>
<svg class="a" style="left:1236px;top:270px" width="9" height="8" viewBox="0 0 9 8"><path d="M1 6 L4.5 2.5 L8 6" fill="none" stroke="#606060" stroke-width="2"/></svg>
<svg class="a" style="left:1236px;top:399px" width="9" height="8" viewBox="0 0 9 8"><path d="M1 2 L4.5 5.5 L8 2" fill="none" stroke="#606060" stroke-width="2"/></svg>
<div class="a" style="left:1233px;top:290px;width:15px;height:16px;background:#cdcdcd"></div>
<div class="a" style="left:5px;top:412px;width:1244px;height:1px;background:#8f9bb0"></div>
<div class="a" style="left:5px;top:413px;width:1244px;height:16px;background:#fff"></div>
<div class="a" style="left:5px;top:413px;width:241px;height:16px;background:#c7d0dd"></div>
<div class="t" style="left:10px;top:414px;transform:scaleX(.9)">Datensatz:</div>
<div class="a" style="left:75px;top:417px;width:2px;height:7px;background:#3a4a6e"></div>
<svg class="a" style="left:79px;top:417px" width="4" height="7" viewBox="0 0 4 7" shape-rendering="crispEdges"><path d="M0 3H1V2H2V1H3V0H4V7H3V6H2V5H1V4H0Z" fill="#3a4a6e"/></svg>
<svg class="a" style="left:97px;top:417px" width="4" height="7" viewBox="0 0 4 7" shape-rendering="crispEdges"><path d="M0 3H1V2H2V1H3V0H4V7H3V6H2V5H1V4H0Z" fill="#3a4a6e"/></svg>
<div class="a" style="left:110px;top:414px;width:43px;height:14px;background:#fff;border:1px solid #98a2b3"></div>
<div class="t" style="left:146px;top:414px">4</div>
<div class="t" style="left:156px;top:414px">von</div>
<div class="t" style="left:185px;top:414px;letter-spacing:0.3px">41</div>
<svg class="a" style="left:212px;top:417px" width="4" height="7" viewBox="0 0 4 7" shape-rendering="crispEdges"><path d="M0 0H1V1H2V2H3V3H4V4H3V5H2V6H1V7H0Z" fill="#3a4a6e"/></svg>
<svg class="a" style="left:230px;top:417px" width="4" height="7" viewBox="0 0 4 7" shape-rendering="crispEdges"><path d="M0 0H1V1H2V2H3V3H4V4H3V5H2V6H1V7H0Z" fill="#3a4a6e"/></svg>
<div class="a" style="left:236px;top:417px;width:2px;height:7px;background:#3a4a6e"></div>
</body></html>
